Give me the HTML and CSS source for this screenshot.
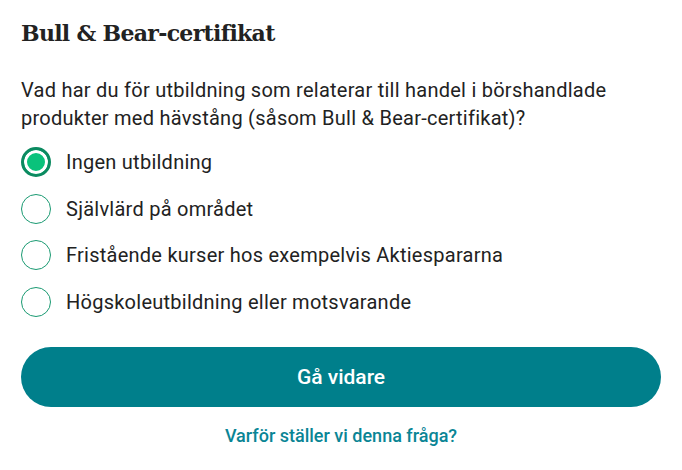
FILE: index.html
```html
<!DOCTYPE html>
<html lang="sv">
<head>
    <meta charset="UTF-8">
    <meta name="viewport" content="width=device-width, initial-scale=1.0">
    <title>Bull &amp; Bear-certifikat</title>
    <link rel="stylesheet" href="styles.css">
</head>
<body>
    <div class="container">
        <h1 class="title">Bull &amp; Bear-certifikat</h1>

        <p class="question">Vad har du för utbildning som relaterar till handel i börshandlade produkter med hävstång (såsom Bull &amp; Bear-certifikat)?</p>

        <form class="options">
            <label class="option">
                <input type="radio" name="education" value="none" checked>
                <span class="radio"></span>
                <span>Ingen utbildning</span>
            </label>
            <label class="option">
                <input type="radio" name="education" value="self">
                <span class="radio"></span>
                <span>Självlärd på området</span>
            </label>
            <label class="option">
                <input type="radio" name="education" value="courses">
                <span class="radio"></span>
                <span>Fristående kurser hos exempelvis Aktiespararna</span>
            </label>
            <label class="option">
                <input type="radio" name="education" value="university">
                <span class="radio"></span>
                <span>Högskoleutbildning eller motsvarande</span>
            </label>
        </form>

        <button class="btn" type="button">Gå vidare</button>

        <div class="text-center">
            <a class="why-link" href="#">Varför ställer vi denna fråga?</a>
        </div>
    </div>
</body>
</html>
```

FILE: styles.css
```css
body {
    font-family: Roboto, "Liberation Sans", Arial, sans-serif;
    margin: 0;
    padding: 0;
    background-color: #fff;
    color: #222;
}
.container {
    padding: 0 21px;
}
.title {
    font-family: "DejaVu Serif", "Liberation Serif", serif;
    font-size: 22px;
    font-weight: bold;
    letter-spacing: -0.7px;
    margin: 0;
    padding-top: 19px;
    line-height: 28px;
    color: #222;
}
.question {
    font-size: 20px;
    line-height: 28px;
    letter-spacing: 0.25px;
    margin: 29px 0 15px;
}
.options {
    display: flex;
    flex-direction: column;
    gap: 16.5px;
}
.option {
    display: flex;
    align-items: center;
    gap: 15px;
    font-size: 20px;
    line-height: 30px;
    letter-spacing: 0.25px;
    cursor: pointer;
}
.option input {
    display: none;
}
.radio {
    box-sizing: border-box;
    width: 30px;
    height: 30px;
    border-radius: 50%;
    border: 1px solid #1a9a72;
    flex-shrink: 0;
}
.option input:checked + .radio {
    border: 3px solid #0b8a60;
    background-color: #0ac27b;
    box-shadow: inset 0 0 0 3px #fff;
}
.btn {
    display: block;
    width: 100%;
    height: 60px;
    margin-top: 30px;
    border: none;
    border-radius: 30px;
    background-color: #007f8b;
    color: #fff;
    font-family: Roboto, "Liberation Sans", sans-serif;
    font-size: 21px;
    font-weight: 500;
    cursor: pointer;
}
.text-center {
    text-align: center;
    margin-top: 18px;
}
.why-link {
    color: #0a8595;
    font-size: 18px;
    font-weight: 500;
    text-decoration: none;
}
```
